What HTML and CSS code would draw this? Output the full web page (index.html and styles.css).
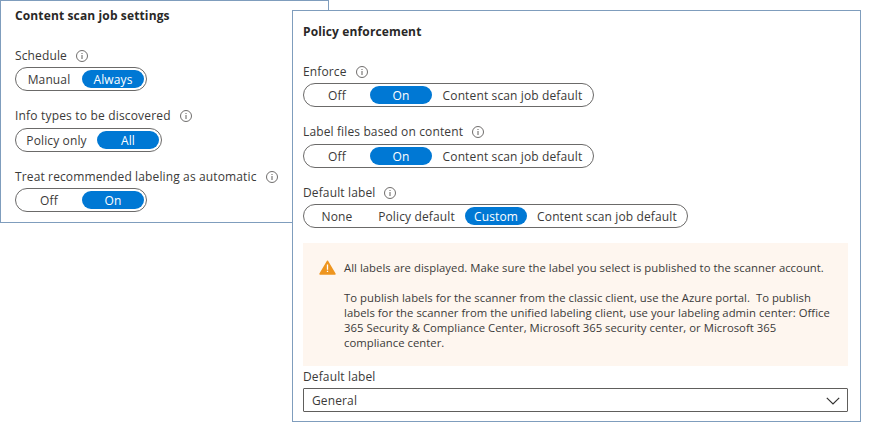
FILE: index.html
```html
<!DOCTYPE html>
<html lang="en">
<head>
<meta charset="utf-8">
<title>Content scan job</title>
<link rel="stylesheet" href="styles.css">
</head>
<body>
<svg width="0" height="0" class="defs">
  <symbol id="info" viewBox="0 0 12 12">
    <circle cx="6" cy="6" r="5.5" fill="none" stroke="#605e5c" stroke-width=".9"/>
    <path d="M6 5v4M6 3v1" stroke="#605e5c" stroke-width="1"/>
  </symbol>
</svg>
<main class="page">
  <section class="panel scan">
    <h2 class="title">Content scan job settings</h2>
    <div class="field">
      <div class="label"><span>Schedule</span><svg class="info"><use href="#info"/></svg></div>
      <div class="toggle"><span class="opt">Manual</span><span class="opt on">Always</span></div>
    </div>
    <div class="field middle">
      <div class="label wide"><span>Info types to be discovered</span><svg class="info"><use href="#info"/></svg></div>
      <div class="toggle"><span class="opt policy-only">Policy only</span><span class="opt on">All</span></div>
    </div>
    <div class="field">
      <div class="label"><span>Treat recommended labeling as automatic</span><svg class="info"><use href="#info"/></svg></div>
      <div class="toggle"><span class="opt">Off</span><span class="opt on">On</span></div>
    </div>
  </section>
  <section class="panel policy">
    <h2 class="title">Policy enforcement</h2>
    <div class="field">
      <div class="label"><span>Enforce</span><svg class="info"><use href="#info"/></svg></div>
      <div class="toggle"><span class="opt">Off</span><span class="opt on">On</span><span class="opt job-default">Content scan job default</span></div>
    </div>
    <div class="field middle">
      <div class="label"><span>Label files based on content</span><svg class="info"><use href="#info"/></svg></div>
      <div class="toggle"><span class="opt">Off</span><span class="opt on">On</span><span class="opt job-default">Content scan job default</span></div>
    </div>
    <div class="field">
      <div class="label"><span>Default label</span><svg class="info"><use href="#info"/></svg></div>
      <div class="toggle four"><span class="opt">None</span><span class="opt policy-default">Policy default</span><span class="opt on">Custom</span><span class="opt job-default">Content scan job default</span></div>
    </div>
    <div class="notice">
      <svg class="warn" viewBox="0 0 17 15"><path d="M8.5 1.3 15.9 14H1.1Z" fill="#ee951f" stroke="#ee951f" stroke-width="1.6" stroke-linejoin="round"/><path d="M8.5 4.6v5.2M8.5 10.8v1.3" stroke="#fff" stroke-width="1.3"/></svg>
      <div class="notice-text">
        <p>All labels are displayed. Make sure the label you select is published to the scanner account.</p>
        <p>To publish labels for the scanner from the classic client, use the Azure portal.&nbsp; To publish<br>labels for the scanner from the unified labeling client, use your labeling admin center: Office<br>365 Security &amp; Compliance Center, Microsoft 365 security center, or Microsoft 365<br>compliance center.</p>
      </div>
    </div>
    <div class="select-label">Default label</div>
    <div class="select"><span>General</span><svg class="chevron" viewBox="0 0 14 8"><path d="M.8.8 7 7 13.2.8" fill="none" stroke="#323130" stroke-width="1.2"/></svg></div>
  </section>
</main>
</body>
</html>
```
FILE: styles.css
```css
* { box-sizing: border-box; }
body {
  margin: 0;
  background: #fff;
  color: #3b3a39;
  font: 12px/16px "Open Sans", "Noto Sans", sans-serif;
  letter-spacing: .13px;
  overflow: hidden;
}
.defs { display: block; }
.page { display: flex; align-items: flex-start; height: 422px; }
.panel {
  flex: none;
  background: #fff;
  border: 1px solid #7f9dbd;
}
.scan { width: 329px; height: 223px; padding: 7px 14px; }
.policy {
  position: relative;
  width: 569px;
  height: 412px;
  margin: 10px 0 0 -37px;
  padding: 13px 12px 0 10px;
}
.title {
  margin: 0 0 24px;
  font-size: 12px;
  line-height: 16px;
  font-weight: 700;
  color: #292827;
  white-space: nowrap;
}
.field { height: 60px; }
.middle { height: 61px; }
.label { display: flex; align-items: center; height: 16px; gap: 9px; white-space: nowrap; }
.wide { letter-spacing: .18px; }
.info { width: 12px; height: 12px; flex: none; }
.toggle {
  display: flex;
  align-items: center;
  gap: 2px;
  width: max-content;
  height: 24px;
  margin-top: 3px;
  padding: 0 2px;
  border: 1px solid #6b6a69;
  border-radius: 12px;
}
.middle .toggle { margin-top: 4px; }
.opt {
  width: 62px;
  height: 18px;
  line-height: 20px;
  border-radius: 9px;
  text-align: center;
  white-space: nowrap;
}
.on { background: #0078d4; color: #fff; }
.policy-only { width: 77px; }
.policy-default { width: 93px; }
.job-default { width: 157px; }
.four .job-default { width: 156px; }
.notice {
  display: flex;
  height: 123px;
  margin-top: -2px;
  padding: 17px 0 0 16px;
  gap: 8px;
  background: #fef6ef;
  font-size: 11.3px;
  letter-spacing: .03px;
  line-height: 15px;
}
.warn { width: 17px; height: 15px; flex: none; }
.notice-text p { margin: 0 0 15px; white-space: nowrap; }
.select-label { margin-top: 2px; height: 17px; line-height: 17px; }
.select {
  display: flex;
  align-items: center;
  justify-content: space-between;
  height: 24px;
  margin-top: 3px;
  padding: 1px 7px 0 8px;
  border: 1px solid #605e5c;
  border-radius: 1px;
}
.chevron { width: 14px; height: 8px; }
```
